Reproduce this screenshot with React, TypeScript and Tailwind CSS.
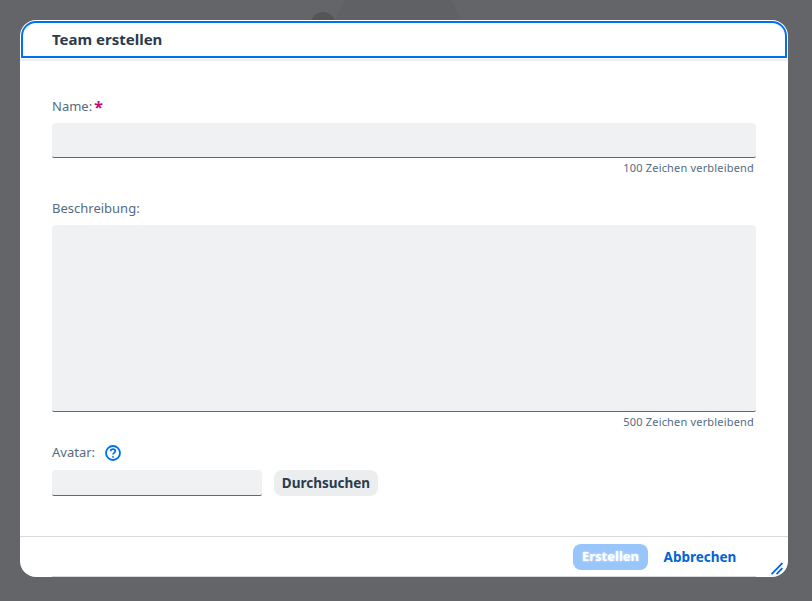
import { HTMLAttributes } from 'react';

const FONT = 'font-["Noto_Sans","Open_Sans",sans-serif]';

function Field({ className = '' }: HTMLAttributes<HTMLDivElement>) {
  return <div className={`rounded-t-[4px] rounded-b-[2px] border-b border-[#556b82] bg-[#eff1f2] ${className}`} />;
}

function Counter({ children, className = '' }: { children: string; className?: string }) {
  return (
    <div className={`pr-[2px] text-right text-[11px] leading-[14px] tracking-[0.18px] text-[#556b82] ${className}`}>
      {children}
    </div>
  );
}

function HelpIcon() {
  return (
    <svg width="16" height="16" viewBox="0 0 16 16" fill="none" strokeWidth="1.8">
      <circle cx="8" cy="8" r="7" stroke="#0070f2" />
      <path d="M5.7 6.3c0-1.4 1-2.2 2.3-2.2s2.3.8 2.3 2c0 1.8-2.3 1.7-2.3 3.5" stroke="#0070f2" />
      <circle cx="8" cy="11.9" r="0.9" fill="#0070f2" />
    </svg>
  );
}

function ResizeGrip() {
  return (
    <svg width="12" height="13" viewBox="0 0 12 13" fill="none" stroke="#0064d9" strokeWidth="1.8">
      <path d="M0.6 12.2L11.4 1" />
      <path d="M5.6 12.2L11.4 6.2" />
    </svg>
  );
}

export default function App() {
  return (
    <div className={`relative flex h-[601px] w-[812px] overflow-hidden bg-[#636569] pl-[20px] pt-[20px] ${FONT}`}>
      {/* page behind the dialog, barely visible above it */}
      <div className="absolute left-[335px] top-0 h-[20px] w-[126px] bg-[#5f6164] [clip-path:polygon(0_100%,8%_0,92%_0,100%_100%)]" />
      <div className="absolute left-[311px] top-[12px] h-[24px] w-[24px] rounded-full bg-[#535557]" />

      <div className="relative flex h-[557px] w-[768px] flex-col overflow-hidden rounded-[16px] bg-white">
        <div className="p-px">
          <header className="flex h-[37px] items-center rounded-t-[15px] border-2 border-[#0070f2] pl-[29px] text-[15px] font-bold text-[#2a3b4e]">
            Team erstellen
          </header>
        </div>
        <div className="h-[2px] bg-[#eeeff0]" />

        <main className="flex-1 px-[32px] pt-[36px]">
          <div className="flex h-[20px] items-center text-[13px] text-[#556b82]">
            Name:
            <span className="ml-[2px] text-[16px] font-bold leading-none text-[#c7057c]">*</span>
          </div>
          <Field className="mt-[6px] h-[35px]" />
          <Counter className="mt-[3px]">100 Zeichen verbleibend</Counter>

          <div className="mt-[24px] flex h-[20px] items-center text-[13px] text-[#556b82]">Beschreibung:</div>
          <Field className="mt-[6px] h-[187px]" />
          <Counter className="mt-[3px]">500 Zeichen verbleibend</Counter>

          <div className="mt-[14px] flex h-[20px] items-center gap-[10px] text-[13px] text-[#556b82]">
            Avatar:
            <HelpIcon />
          </div>
          <div className="mt-[7px] flex items-center gap-[12px]">
            <Field className="h-[26px] w-[210px]" />
            <button type="button" className="h-[26px] w-[104px] rounded-[8px] bg-[#ebedef] text-[13.5px] font-bold text-[#2a3b4e]">
              Durchsuchen
            </button>
          </div>
        </main>

        <footer className="flex h-[40px] items-center justify-end gap-[8px] border-t border-[#d9d9d9] pr-[44px]">
          <button
            type="button"
            className="h-[26px] w-[75px] rounded-[8px] bg-[#99c6fa] pt-px text-[13px] font-bold text-white [text-shadow:0_0_2px_rgba(255,255,255,0.9)]"
          >
            Erstellen
          </button>
          <button type="button" className="h-[26px] w-[88px] pt-px text-[13.5px] font-bold text-[#0064d9]">
            Abbrechen
          </button>
        </footer>
        <div className="mx-[32px] h-px bg-[#d9d9d9]" />
        <div className="absolute bottom-[2px] right-[5px]">
          <ResizeGrip />
        </div>
      </div>
    </div>
  );
}
